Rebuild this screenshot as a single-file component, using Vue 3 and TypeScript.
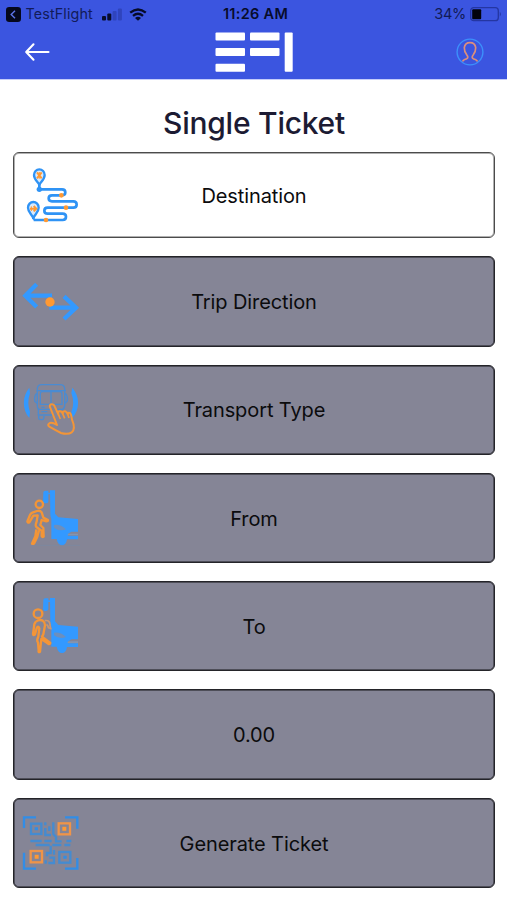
<script setup lang="ts">
interface Option {
  label: string
  icon: string
  viewBox: string
  active?: boolean
}

const options: Option[] = [
  { label: 'Destination', icon: 'route', viewBox: '30 45 180 180', active: true },
  { label: 'Trip Direction', icon: 'direction', viewBox: '30 64 180 180' },
  { label: 'Transport Type', icon: 'transport', viewBox: '30 59 180 180' },
  { label: 'From', icon: 'from', viewBox: '30 60 180 180' },
  { label: 'To', icon: 'to', viewBox: '30 58 180 180' },
  { label: '0.00', icon: '', viewBox: '' },
  { label: 'Generate Ticket', icon: 'qr', viewBox: '30 60 180 180' },
]
</script>

<template>
  <div class="screen">
    <header class="header">
      <div class="status">
        <div class="status-left">
          <svg class="back-app" viewBox="0 0 15 15"><rect width="15" height="15" rx="3.2" fill="#05081c" /><path d="M9 3.8 5.2 7.5 9 11.2" fill="none" stroke="#5c74e8" stroke-width="1.4" /></svg>
          <span class="app-name">TestFlight</span>
          <svg class="signal" viewBox="0 0 20 13">
            <rect x="0" y="8" width="4" height="4.5" rx="1" fill="#080d2c" />
            <rect x="5.3" y="5.5" width="4" height="7" rx="1" fill="#080d2c" />
            <rect x="10.6" y="3" width="4" height="9.5" rx="1" fill="#2f44bd" />
            <rect x="15.9" y="0.5" width="4" height="12" rx="1" fill="#2f44bd" />
          </svg>
          <svg class="wifi" viewBox="0 0 18 13" fill="none" stroke="#060b28" stroke-width="2.3">
            <path d="M1.2 4.7Q9-1.8 16.8 4.7M4 7.8Q9 3.6 14 7.8" />
            <path d="M6 9.9Q9 7.7 12 9.9L9 12.8Z" fill="#060b28" stroke="none" />
          </svg>
        </div>
        <span class="time">11:26 AM</span>
        <div class="status-right">
          <span class="percent">34%</span>
          <svg class="battery" viewBox="0 0 32 15">
            <rect x="0.7" y="0.7" width="27.6" height="13" rx="3" fill="none" stroke="#2436a2" stroke-width="1.3" />
            <rect x="2.2" y="2.2" width="9" height="10" rx="1" fill="#02030c" />
            <path d="M29.8 4.8Q32 7.2 29.8 9.6Z" fill="#2436a2" />
          </svg>
        </div>
      </div>
      <nav class="nav">
        <svg class="back" viewBox="0 0 26 20" fill="none" stroke="#fff" stroke-width="2.1" stroke-linecap="round" stroke-linejoin="round"><path d="M24.500 10H2.500M9.500 2.300 2.200 10l7.300 7.700" /></svg>
        <svg class="logo" viewBox="0 0 78 40" fill="#fff">
          <rect x="0.5" y="0.5" width="29.5" height="8" rx="1" />
          <rect x="0.5" y="16" width="29.5" height="8" rx="1" />
          <rect x="0.5" y="31.7" width="29.5" height="8" rx="1" />
          <rect x="35" y="0.5" width="29.5" height="8" rx="1" />
          <rect x="35" y="16" width="29.5" height="8" rx="1" />
          <rect x="69.7" y="0.5" width="8" height="39.2" rx="1" />
        </svg>
        <svg class="profile" viewBox="0 0 28 28" fill="none">
          <circle cx="14" cy="14" r="12.9" stroke="#3c90fb" stroke-width="1.4" />
          <path d="M7 22.800Q8 21.300 10.500 20.800Q12.800 19.500 11 17.300Q8.100 13.500 8.300 9.600Q9 4.600 14 4.600T19.700 9.600Q19.900 13.500 17 17.300Q15.200 19.500 17.500 20.800Q20 21.300 21 22.800" stroke="#dc8f7c" stroke-width="1.7" stroke-linecap="round" />
        </svg>
      </nav>
    </header>

    <main class="content">
      <h1 class="title">Single Ticket</h1>
      <div class="options">
        <button v-for="o in options" :key="o.label" class="option" :class="{ active: o.active }">
          <svg v-if="o.icon" class="icon" :viewBox="o.viewBox" fill="none">
            <g v-if="o.icon === 'route'">
              <path d="M88 118H156Q166 118 166 127T156 136H126Q116 136 116 145T126 154H190Q200 154 200 163.5T190 173H113Q103 173 103 182T113 191H158Q168 191 168 200.5T158 210H71" stroke="#2f93f5" stroke-width="8" />
              <path d="M88 118V96M70 207V193" stroke="#2f93f5" stroke-width="8" />
              <circle cx="88" cy="118" r="8" fill="#2f93f5" />
              <path d="M88 104C82 94 72 88 72 75a16 17 0 0 1 32 0C104 88 94 94 88 104ZM70 204C64 192 54 186 54 173a16 17 0 0 1 32 0C86 186 76 192 70 204Z" fill="#d9eafc" stroke="#2f93f5" stroke-width="7" />
              <path d="M81 67 95 85M95 67 81 85M60 176H79M71 168 79 176 71 184" stroke="#ff9933" stroke-width="6" />
              <path d="M88 66v20M64 169v14" stroke="#ff9933" stroke-width="3" />
              <g fill="#ff9933"><circle cx="154" cy="136" r="7" /><circle cx="168" cy="173" r="7" /><circle cx="108" cy="210" r="7" /></g>
            </g>
            <g v-else-if="o.icon === 'direction'">
              <path d="M126 138H48M80 104 46 138 80 172M118 174H196M162 140 198 174 162 208" stroke="#3399ff" stroke-width="13" />
              <circle cx="120" cy="157" r="14" fill="#ff9933" />
            </g>
            <g v-else-if="o.icon === 'transport'">
              <path d="M58 82C36 108 36 147 58 173L60 155Q50 127 60 99ZM187 82C210 108 210 147 187 173L184 156Q195 127 184 98Z" fill="#3399ff" />
              <g stroke="#4a8bd2" stroke-width="4">
                <path d="M82 84Q84 73 95 73H151Q162 73 164 84V137Q162 147 155 147H89Q82 147 82 137ZM79 91H168M91 132V100Q91 94 98 94H150Q156 94 156 101V132ZM123 94V132M82 98Q72 104 74 122L82 130M164 98Q174 104 172 122L164 130M85 147V164H157M86 166V174Q87 178 93 178H98Q102 177 102 167M94 141H104M94 154H112" />
              </g>
              <path d="M120 140Q118 132 125 132Q132 132 134 138L146 164Q142 154 148 153Q155 151 158 160Q159 151 166 153Q171 155 173 162Q175 154 181 159Q185 164 186 178Q198 206 185 216Q174 224 153 218Q137 210 118 199Q111 194 118 189Q124 184 141 194Z" fill="#858596" stroke="#f39537" stroke-width="6" stroke-linejoin="round" />
              <path d="M146 164l5 12M158 160l6 14M173 162l4 11" stroke="#f39537" stroke-width="5" />
            </g>
            <g v-else-if="o.icon === 'from' || o.icon === 'to'">
              <g fill="#3399ff" :class="{ raised: o.icon === 'to' }">
                <path d="M100 73Q100 68 106 68H115V101Q113 106 108 106H104Q99 105 99 99ZM120 67H135V137L145 148 204 153V191H184L174 198V203H204V214H171Q168 232 156 232Q144 232 140 213H124V152Q121 145 121 140ZM113 74H123V79H113Z" />
                <path d="M132 171Q151 168 168 184Q148 192 132 179Z" fill="#6c8fbd" />
                <path d="M175 197H204V202H172Z" fill="#8395b0" />
              </g>
              <template v-if="o.icon === 'from'">
                <path d="M75 232H210" stroke="#748aa9" stroke-width="1.5" />
                <g stroke="#f39537" stroke-width="7" stroke-linejoin="round">
                  <circle cx="88" cy="109" r="11" />
                  <path d="M67 134 81 129Q90 126 95 133L100 149 114 156Q114 160 109 160L95 156 91 171 100 180 101 206Q97 209 95 204V188L79 177Q75 172 80 160L83 142 70 143 58 163Q52 165 52 160L60 141Q62 136 67 134M79 184 76 205 66 227Q72 229 73 225L82 206 87 187" />
                </g>
              </template>
              <g v-else stroke="#f39537" stroke-width="7" stroke-linejoin="round">
                <circle cx="84" cy="111" r="13" />
                <path d="M78 135Q88 127 98 132Q105 137 105 146L100 173 96 180 121 199Q120 204 114 201L94 187 90 226Q84 228 86 222L84 198Q79 191 85 180L88 155Q84 145 80 155L75 173Q70 178 69 172L72 151Q72 139 78 135" />
                <path d="M104 132Q120 129 120 145L122 156M109 144Q114 145 115 153L125 157" stroke="#c99672" stroke-width="5" />
              </g>
            </g>
            <g v-else>
              <path d="M42 105V73H78M165 73H202V107M42 179V227H78M165 227H202V195" stroke="#328de6" stroke-width="7" />
              <g stroke="#458bd0" stroke-width="7">
                <rect x="63" y="92" width="31" height="31" />
                <rect x="148" y="177" width="33" height="32" />
                <path d="M106 88V97M106 105V126H123M118 100V114M130 88V123L138 132V145H155M61 144H95M103 144H125M169 144H184M77 156H119M127 156H154M163 156H181M122 158V180H111V190M132 171V185M107 202V212M118 194H132V210H115" />
              </g>
              <path d="M74 103h10v9H74ZM160 188h10v9h-10Z" fill="#328de6" />
              <g stroke="#ef9448" stroke-width="7"><rect x="146" y="91" width="34" height="33" /><rect x="62" y="174" width="34" height="34" /></g>
              <path d="M157 101h12v12h-12ZM74 185h12v12H74Z" fill="#ff9933" />
            </g>
          </svg>
          <span class="label">{{ o.label }}</span>
        </button>
      </div>
    </main>
  </div>
</template>

<style>
body { margin: 0; background: #fff; }
</style>

<style scoped>
.screen { width: 100%; height: 900px; overflow: hidden; font-family: Inter, "Liberation Sans", sans-serif; background: #fff; }
.header { box-sizing: border-box; height: 79px; background: #3b55e0; box-shadow: 0 1px 0 #c4cdfa; }
.status { display: grid; grid-template-columns: 1fr auto 1fr; align-items: center; height: 28px; padding: 0 5px 0 6px; color: #070c2b; font-size: 14.5px; line-height: 28px; }
.status-left, .status-right { display: flex; align-items: center; }
.status-right { justify-content: flex-end; }
.back-app { width: 15px; height: 15px; }
.app-name { width: 67px; margin-left: 4.5px; color: #121b59; font-size: 14.3px; letter-spacing: 0.15px; }
.signal { width: 20px; height: 13px; margin-left: 9px; }
.wifi { width: 18px; height: 13px; margin-left: 7px; }
.time { font-weight: 600; font-size: 14.5px; letter-spacing: 0.3px; margin-left: 3px; }
.percent { color: #111a55; margin-right: 4px; letter-spacing: -0.3px; }
.battery { width: 32px; height: 15px; }
.nav { display: grid; grid-template-columns: 1fr auto 1fr; align-items: center; height: 48px; padding: 0 23px 0 24px; }
.back { width: 26px; height: 20px; }
.logo { width: 78px; height: 40px; }
.profile { width: 28px; height: 28px; justify-self: end; }
.content { padding: 0 12px 0 13px; }
.title { margin: 0; height: 73px; padding-top: 8px; box-sizing: border-box; line-height: 72px; text-align: center; color: #1c1b33; font-size: 30px; font-weight: 500; letter-spacing: -0.25px; }
.options { display: flex; flex-direction: column; gap: 18px; }
.option { position: relative; display: flex; align-items: center; justify-content: center; box-sizing: border-box; width: 100%; height: 90.3px; padding: 0; border: 1px solid #242429; box-shadow: inset 0 0 0 0.7px #3c3c44; border-radius: 6px; background: #858596; color: #0b0b0d; font: inherit; font-size: 20px; }
.option.active { height: 86.3px; background: #fff; border-color: #4c4c4c; box-shadow: inset 0 0 0 1px #b0b0b0; }
.label { padding-top: 1.5px; letter-spacing: -0.1px; }
.icon { position: absolute; left: 6px; width: 60px; height: 60px; }
.raised { transform: translateY(-3px); }
</style>
